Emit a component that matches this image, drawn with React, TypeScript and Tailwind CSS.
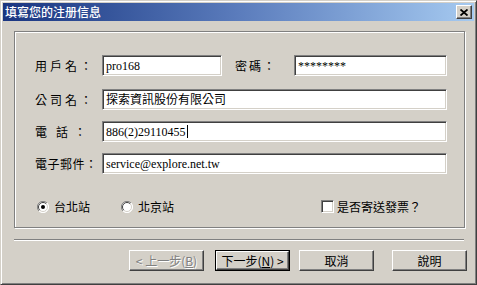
import React from 'react'

const cjk = '"Noto Sans CJK TC", "Noto Sans CJK SC", sans-serif'
const mixed = '"Liberation Serif", "Noto Sans CJK TC", serif'

const sunken =
  'bg-white border border-t-[#808080] border-l-[#808080] border-b-white border-r-white shadow-[inset_1px_1px_0_#404040,inset_-1px_-1px_0_#d4d0c8]'

const raised =
  'bg-[#d4d0c8] border border-t-white border-l-white border-b-[#404040] border-r-[#404040] shadow-[inset_-1px_-1px_0_#808080]'

function Field({ width, value, caret }: { width: string; value: string; caret?: boolean }) {
  return (
    <div
      className={`${sunken} ${width} h-[21px] flex items-center pl-[3px] text-[12px] text-black leading-none`}
      style={{ fontFamily: mixed }}
    >
      <span>{value}</span>
      {caret && <span className="ml-[1px] w-[1px] h-[13px] bg-black" />}
    </div>
  )
}

function Label({ children, width }: { children: React.ReactNode; width: string }) {
  return (
    <div className={`${width} text-[12px] text-black leading-none flex`} style={{ fontFamily: cjk }}>
      {children}
    </div>
  )
}

function Radio({ checked }: { checked?: boolean }) {
  return (
    <svg width="12" height="12" viewBox="0 0 12 12" className="shrink-0">
      <circle cx="6" cy="6" r="5.5" fill="#fff" />
      <path d="M10 2 A5.5 5.5 0 0 0 2 10" stroke="#808080" fill="none" strokeWidth="1" />
      <path d="M9.2 2.8 A4.5 4.5 0 0 0 2.8 9.2" stroke="#404040" fill="none" strokeWidth="1" />
      <path d="M2 10 A5.5 5.5 0 0 0 10 2" stroke="#ffffff" fill="none" strokeWidth="1" />
      <path d="M2.8 9.2 A4.5 4.5 0 0 0 9.2 2.8" stroke="#d4d0c8" fill="none" strokeWidth="1" />
      {checked && <circle cx="6" cy="6" r="2" fill="#000" />}
    </svg>
  )
}

function Button({
  children,
  isDefault,
  disabled,
  className = '',
}: {
  children: React.ReactNode
  isDefault?: boolean
  disabled?: boolean
  className?: string
}) {
  const inner = (
    <div
      className={`${raised} w-full h-full flex items-center justify-center text-[12px] leading-none ${
        disabled ? 'text-[#808080] [text-shadow:1px_1px_0_#fff]' : 'text-black'
      }`}
      style={{ fontFamily: cjk }}
    >
      {children}
    </div>
  )
  if (isDefault) {
    return <div className={`border border-black w-[75px] h-[21px] ${className}`}>{inner}</div>
  }
  return <div className={`w-[75px] h-[21px] ${className}`}>{inner}</div>
}

export default function App() {
  return (
    <div className="w-[477px] h-[285px] bg-[#d4d0c8] border border-t-[#d4d0c8] border-l-[#d4d0c8] border-b-[#404040] border-r-[#404040] shadow-[inset_1px_1px_0_#fff,inset_-1px_-1px_0_#808080] p-[2px] overflow-hidden">
      {/* title bar */}
      <div className="h-[18px] bg-linear-to-r from-[#1a3580] via-[#5b7cbc] to-[#a6caf0] flex items-center justify-between pl-[2px] pr-[2px]">
        <span className="text-white font-medium text-[12px] leading-none" style={{ fontFamily: cjk }}>
          填寫您的注册信息
        </span>
        <div className={`${raised} w-[16px] h-[14px] flex items-center justify-center`}>
          <svg width="8" height="7" viewBox="0 0 8 7">
            <path d="M0.5 0.5 L7.5 6.5 M7.5 0.5 L0.5 6.5" stroke="#000" strokeWidth="1.8" />
          </svg>
        </div>
      </div>

      {/* group box */}
      <div className="ml-[11px] mt-[10px] w-[451px] h-[197px] border border-[#808080] shadow-[inset_1px_1px_0_#fff,1px_1px_0_#fff] pt-[23px]">
        <div className="flex items-center pl-[20px]">
          <Label width="w-[67px]">
            <span className="tracking-[3px]">用戶名：</span>
          </Label>
          <Field width="w-[120px]" value="pro168" />
          <div className="ml-[13px]">
            <Label width="w-[59px]">
              <span className="tracking-[2px]">密碼：</span>
            </Label>
          </div>
          <Field width="w-[153px]" value="********" />
        </div>
        <div className="flex items-center pl-[20px] mt-[13px]">
          <Label width="w-[67px]">
            <span className="tracking-[3px]">公司名：</span>
          </Label>
          <Field width="w-[345px]" value="探索資訊股份有限公司" />
        </div>
        <div className="flex items-center pl-[20px] mt-[11px]">
          <Label width="w-[67px]">
            <span>電</span>
            <span className="ml-[9px]">話</span>
            <span className="ml-[6px]">：</span>
          </Label>
          <Field width="w-[345px]" value="886(2)29110455" caret />
        </div>
        <div className="flex items-center pl-[20px] mt-[11px]">
          <Label width="w-[67px]">
            <span className="tracking-[0.5px]">電子郵件：</span>
          </Label>
          <Field width="w-[345px]" value="service@explore.net.tw" />
        </div>

        <div className="flex items-center pl-[22px] mt-[26px] text-[12px] leading-none" style={{ fontFamily: cjk }}>
          <div className="w-[84px] flex items-center gap-[5px]">
            <Radio checked />
            <span>台北站</span>
          </div>
          <div className="w-[200px] flex items-center gap-[5px]">
            <Radio />
            <span>北京站</span>
          </div>
          <div className="flex items-center gap-[3px]">
            <div className={`${sunken} w-[13px] h-[13px]`} />
            <span>是否寄送發票？</span>
          </div>
        </div>
      </div>

      {/* separator */}
      <div className="ml-[11px] mt-[11px] w-[450px] h-[2px] border-t border-t-[#808080] border-b border-b-white" />

      {/* buttons */}
      <div className="flex mt-[9px] ml-[126px]">
        <Button disabled>&lt; 上一步(<span className="underline">B</span>)</Button>
        <Button isDefault className="ml-[11px]">
          下一步(<span className="underline">N</span>) &gt;
        </Button>
        <Button className="ml-[9px]">取消</Button>
        <Button className="ml-[18px]">說明</Button>
      </div>
    </div>
  )
}
